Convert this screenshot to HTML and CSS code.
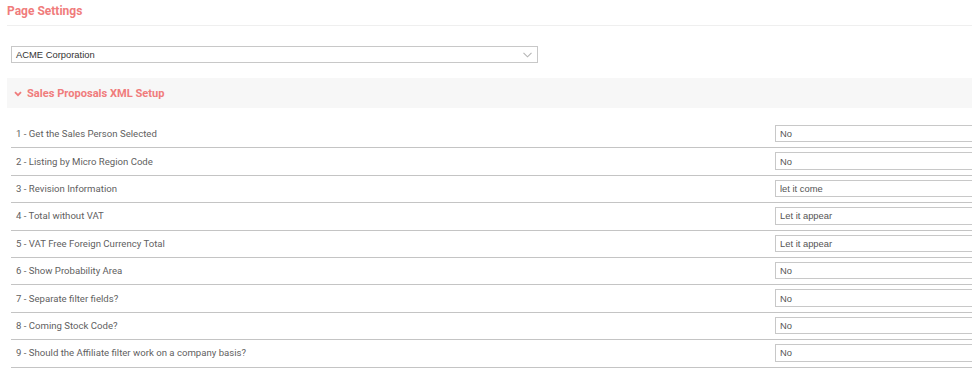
FILE: index.html
```html
<!DOCTYPE html>
<html lang="en">
<head>
  <meta charset="UTF-8"/>
  <title>Page Settings</title>
  <link rel="stylesheet" href="styles.css">
</head>
<body>
  <div class="page">
    <h1 class="page-title">Page Settings</h1>

    <div class="company-select">
      <span>ACME Corporation</span>
      <svg width="9" height="6" viewBox="0 0 9 6"><path d="M0.5 0.8 L4.5 4.8 L8.5 0.8" fill="none" stroke="#b5b5b5" stroke-width="1.1"/></svg>
    </div>

    <div class="section-head">
      <svg width="8" height="6" viewBox="0 0 8 6"><path d="M1 1.2 L4 4.2 L7 1.2" fill="none" stroke="#f07c7c" stroke-width="1.8"/></svg>
      <span>Sales Proposals XML Setup</span>
    </div>

    <div class="settings">
      <div class="row"><label>1 - Get the Sales Person Selected</label><input type="text" value="No" readonly></div>
      <div class="row"><label>2 - Listing by Micro Region Code</label><input type="text" value="No" readonly></div>
      <div class="row"><label>3 - Revision Information</label><input type="text" value="let it come" readonly></div>
      <div class="row"><label>4 - Total without VAT</label><input type="text" value="Let it appear" readonly></div>
      <div class="row"><label>5 - VAT Free Foreign Currency Total</label><input type="text" value="Let it appear" readonly></div>
      <div class="row"><label>6 - Show Probability Area</label><input type="text" value="No" readonly></div>
      <div class="row"><label>7 - Separate filter fields?</label><input type="text" value="No" readonly></div>
      <div class="row"><label>8 - Coming Stock Code?</label><input type="text" value="No" readonly></div>
      <div class="row"><label>9 - Should the Affiliate filter work on a company basis?</label><input type="text" value="No" readonly></div>
    </div>
  </div>
</body>
</html>
```

FILE: styles.css
```css
* { box-sizing:border-box; margin:0; padding:0 }
html, body {
  width:100%; height:100%;
  font-family:Roboto, 'Liberation Sans', sans-serif;
  background:#fff; color:#555;
  overflow:hidden;
}
.page { width:1010px; padding-left:7px }
.page-title {
  font-size:12px; font-weight:bold; color:#f07c7c; line-height:15px;
  padding:4px 0 6px; border-bottom:1px solid #efefef;
}
.company-select {
  display:flex; justify-content:space-between; align-items:center;
  width:527px; height:17px; margin:20px 0 0 4px; padding:0 5px 0 4px;
  border:1px solid #c8c8c8;
  font-family:'Liberation Sans', Arial, sans-serif; font-size:9.4px; color:#333;
}
.section-head {
  display:flex; align-items:center; gap:5px;
  height:30px; margin-top:15px; padding:1px 0 0 7px;
  background:#f7f7f7;
  font-size:11.1px; font-weight:bold; color:#f07c7c;
}
.settings { margin:13px 0 0 4px }
.row {
  display:grid; grid-template-columns:764px 220px; align-items:center;
  padding:4px 0 5px; border-bottom:1px solid #c4c4c4;
}
.row label { padding-left:5px; font-size:9.6px; color:#5f5f5f }
.row input {
  width:100%; height:17.4px; padding:0 4px;
  border:1px solid #c8c8c8; outline:none; background:#fff;
  font-family:'Liberation Sans', Arial, sans-serif; font-size:9.4px; color:#555;
}
```
